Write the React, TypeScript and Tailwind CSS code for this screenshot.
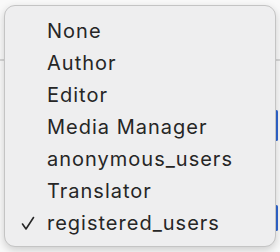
import React from "react";

const items = [
  "None",
  "Author",
  "Editor",
  "Media Manager",
  "anonymous_users",
  "Translator",
  "registered_users",
];

export default function App() {
  return (
    <div className="relative w-[280px] h-[252px] overflow-hidden bg-[#f9f9f9]" style={{ fontFamily: "Inter, 'Noto Sans', sans-serif" }}>
      {/* background content */}
      <div className="absolute left-0 right-0 top-[59px] h-[2px] bg-[#d6d6d6]" />
      <div className="absolute right-[2px] top-[110px] w-[3px] h-[31px] rounded-[2px] bg-[#2f66d0]" />
      <div className="absolute right-[2px] top-[205px] w-[3px] h-[26px] rounded-[2px] bg-[#2f66d0]" />
      {/* menu */}
      <div className="absolute left-[4px] top-[5px] w-[272px] h-[242px] rounded-[11px] border border-[#c4c4c4] bg-[#eeeeef] shadow-[0_3px_8px_rgba(0,0,0,0.18)] pt-[9px]">
        {items.map((t, i) => (
          <div key={t} className="relative h-[32px] flex items-center pl-[42px] text-[20px] text-[#262626] tracking-[1px]">
            {i === items.length - 1 && (
              <svg className="absolute left-[16px] top-[9px]" width="14" height="15" viewBox="0 0 14 15" fill="none">
                <path d="M1.5 8 L5 13 L12.5 1.5" stroke="#262626" strokeWidth="1.6" strokeLinecap="round" strokeLinejoin="round" />
              </svg>
            )}
            {t}
          </div>
        ))}
      </div>
    </div>
  );
}
